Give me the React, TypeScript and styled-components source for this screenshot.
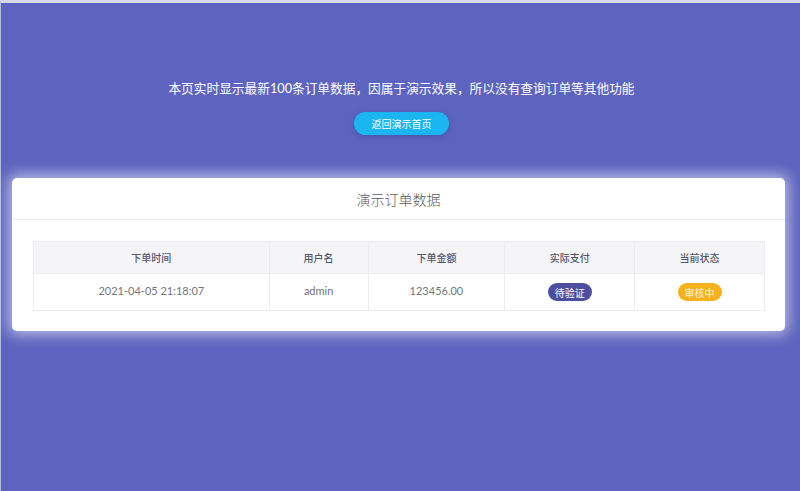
import React from 'react';
import styled, {createGlobalStyle} from 'styled-components';

const GlobalStyle = createGlobalStyle`
  html, body {
    margin: 0;
    padding: 0;
    background: #5d64bf;
  }
  body {
    font-family: Lato, "Noto Sans CJK SC", sans-serif;
  }
`;

const Page = styled.div`
  min-height: 491px;
  box-sizing: border-box;
  background: #5d64bf;
  border-top: 3px solid #d6d8ea;
  border-left: 1px solid #b9bce0;
  padding: 75px 15px 40px 11px;
`;

const Intro = styled.div`
  display: flex;
  flex-direction: column;
  align-items: center;
  gap: 14px;
`;

const Notice = styled.p`
  margin: 0 0 0 6px;
  color: #ffffff;
  font-size: 12.7px;
  line-height: 20px;
  font-family: Lato, "Noto Sans CJK SC", sans-serif;
`;

const BackButton = styled.a`
  display: inline-flex;
  align-items: center;
  justify-content: center;
  width: 95px;
  height: 23px;
  border-radius: 12px;
  background: #1bb5f1;
  color: #ffffff;
  font-size: 10px;
  text-decoration: none;
  box-shadow: 0 2px 6px rgba(20, 40, 120, 0.25);
  margin-left: 6px;
`;

const Card = styled.section`
  margin-top: 43px;
  background: #ffffff;
  border-radius: 5px;
  box-shadow: 0 0 14px 4px rgba(255, 255, 255, 0.55);
`;

const CardHeader = styled.div`
  height: 41px;
  display: flex;
  align-items: center;
  justify-content: center;
  border-bottom: 1px solid #ececf0;
  color: #5a5a66;
  font-size: 14px;
  font-family: "Noto Sans CJK SC", sans-serif;
  font-weight: 300;
`;

const CardBody = styled.div`
  padding: 21px 20px 20px 21px;
`;

const Table = styled.table`
  width: 100%;
  border-collapse: collapse;
  table-layout: fixed;
  border: 1px solid #ececf0;
`;

const Col = styled.col<{ $pct: number }>`
  width: ${p => p.$pct}%;
`;

const Th = styled.th`
  height: 31px;
  padding: 0;
  background: #f5f5f7;
  color: #55556a;
  font-size: 10px;
  font-weight: 500;
  text-align: center;
  border: 1px solid #ececf0;
  font-family: "Noto Sans CJK SC", sans-serif;
`;

const Td = styled.td`
  height: 33px;
  padding: 0 0 3px;
  color: #74747e;
  font-size: 11px;
  text-align: center;
  border: 1px solid #ececf0;
`;

const Badge = styled.span<{ $tone: 'indigo' | 'amber' }>`
  display: inline-flex;
  align-items: center;
  justify-content: center;
  height: 18px;
  padding: 0 7px;
  margin-top: 3px;
  border-radius: 9px;
  font-size: 10px;
  color: ${p => (p.$tone === 'indigo' ? '#ffffff' : '#fff3d6')};
  background: ${p => (p.$tone === 'indigo' ? '#4d4e9e' : '#f5b21b')};
  font-family: "Noto Sans CJK SC", sans-serif;
`;

const columns = [
  {title: '下单时间', w: 236},
  {title: '用户名', w: 99},
  {title: '下单金额', w: 137},
  {title: '实际支付', w: 130},
  {title: '当前状态', w: 130},
];

const total = columns.reduce((s, c) => s + c.w, 0);

const orders = [
  {time: '2021-04-05 21:18:07', user: 'admin', amount: '123456.00', pay: '待验证', status: '审核中'},
];

export default function App() {
  return (
    <Page>
      <GlobalStyle />
      <Intro>
        <Notice>本页实时显示最新100条订单数据，因属于演示效果，所以没有查询订单等其他功能</Notice>
        <BackButton href="#">返回演示首页</BackButton>
      </Intro>
      <Card>
        <CardHeader>演示订单数据</CardHeader>
        <CardBody>
          <Table>
            <colgroup>
              {columns.map(c => (
                <Col key={c.title} $pct={(c.w / total) * 100} />
              ))}
            </colgroup>
            <thead>
              <tr>
                {columns.map(c => (
                  <Th key={c.title}>{c.title}</Th>
                ))}
              </tr>
            </thead>
            <tbody>
              {orders.map(o => (
                <tr key={o.time}>
                  <Td>{o.time}</Td>
                  <Td>{o.user}</Td>
                  <Td>{o.amount}</Td>
                  <Td><Badge $tone="indigo">{o.pay}</Badge></Td>
                  <Td><Badge $tone="amber">{o.status}</Badge></Td>
                </tr>
              ))}
            </tbody>
          </Table>
        </CardBody>
      </Card>
    </Page>
  );
}
